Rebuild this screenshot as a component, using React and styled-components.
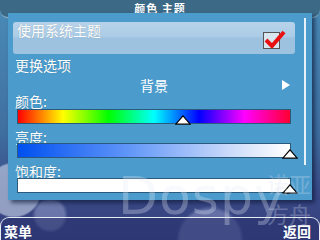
import styled, { createGlobalStyle } from "styled-components";

const GlobalStyle = createGlobalStyle`
  html, body { margin: 0; padding: 0; }
  body { font-family: "Noto Sans CJK SC", "DejaVu Sans", sans-serif; }
`;

const Screen = styled.div`
  position: relative;
  width: 320px;
  height: 240px;
  overflow: hidden;
  display: flex;
  flex-direction: column;
  background:
    radial-gradient(circle at 14px 190px, rgba(220, 230, 245, 0.55) 0 26px, transparent 28px),
    radial-gradient(circle at 50px 215px, rgba(200, 210, 240, 0.35) 0 14px, transparent 18px),
    radial-gradient(circle at 210px 240px, rgba(180, 190, 230, 0.35) 0 30px, transparent 34px),
    linear-gradient(180deg, #4a8cb8 0%, #3f6fa0 55%, #3a4a88 80%, #343f7c 100%);
  color: #fff;
`;

const TitleBar = styled.div`
  height: 18px;
  background: #3b6986;
  border-radius: 0 0 8px 8px;
  border-bottom: 1px solid #9bb8cc;
  box-sizing: border-box;
  text-align: center;
  font-size: 11px;
  line-height: 12px;
  font-weight: bold;
  letter-spacing: 1px;
  padding-top: 2px;
`;

const Panel = styled.div`
  position: relative;
  margin: -5px 8px 0;
  height: 187px;
  background: #4b9bcc;
  box-shadow: 3px 3px 4px rgba(10, 20, 50, 0.6);
  padding: 9px 17px 0 5px;
  box-sizing: border-box;
  display: flex;
  flex-direction: column;
`;

const Scrollbar = styled.div`
  position: absolute;
  right: 6px;
  top: 5px;
  width: 2px;
  height: 147px;
  background: #e6f2fa;
`;

const Highlight = styled.div`
  height: 32px;
  border-radius: 3px;
  background: linear-gradient(180deg, #b6d3ea 0%, #acccE6 45%, #9cc2e0 50%, #9ec3e0 100%);
  display: flex;
  justify-content: space-between;
  padding: 0 15px 0 2px;
  box-sizing: border-box;
`;

const Label = styled.div`
  font-size: 14px;
  line-height: 16px;
  height: ${(p) => p.$h || 16}px;
  padding-left: 2px;
  text-shadow: 0 0 1px rgba(0, 0, 0, 0.25);
`;

const CheckBox = styled.div`
  align-self: flex-end;
  margin-bottom: 5px;
  width: 17px;
  height: 17px;
  border: 1px solid #555;
  background: #d8e6f0;
  position: relative;
  box-sizing: border-box;
  svg { position: absolute; left: 0; top: -4px; }
`;

const ValueRow = styled.div`
  height: 16px;
  margin-top: 4px;
  display: flex;
  align-items: center;
  justify-content: center;
  position: relative;
  font-size: 14px;
`;

const Arrow = styled.span`
  position: absolute;
  right: 5px;
  top: 3px;
  width: 0;
  height: 0;
  border-left: 8px solid #fff;
  border-top: 5px solid transparent;
  border-bottom: 5px solid transparent;
`;

const Bar = styled.div`
  position: relative;
  margin: 0 4px 0 4px;
  height: 15px;
  border: 1px solid #2c5a7c;
  box-sizing: border-box;
  background: ${(p) => p.$bg};
`;

const Marker = styled.svg`
  position: absolute;
  bottom: -2px;
  transform: translateX(-50%);
`;

const Gap = styled.div`
  height: ${(p) => p.$h}px;
  flex: none;
`;

const SoftKeys = styled.div`
  margin-top: auto;
  height: 22px;
  border: 1px solid #e8ecf4;
  border-bottom: none;
  border-radius: 9px 9px 0 0;
  background: rgba(40, 50, 110, 0.55);
  display: flex;
  justify-content: space-between;
  align-items: flex-end;
  padding: 0 8px 0 3px;
  font-size: 14px;
  line-height: 17px;
  font-weight: bold;
`;

const Watermark = styled.div`
  position: absolute;
  left: 118px;
  top: 170px;
  font-family: "DejaVu Sans", sans-serif;
  font-size: 52px;
  line-height: 52px;
  color: rgba(230, 235, 245, 0.3);
  letter-spacing: 1px;
  pointer-events: none;
`;

const WatermarkCn = styled.div`
  position: absolute;
  left: 267px;
  top: 168px;
  font-size: 22px;
  line-height: 30px;
  color: rgba(220, 225, 240, 0.3);
  pointer-events: none;
`;

const hue =
  "linear-gradient(90deg, #ff0000 0%, #ffff00 16.6%, #00ff00 33.3%, #00ffff 50%, #0000ff 66.6%, #ff00ff 83.3%, #ff0033 100%)";

const Tri = ({ left }) => (
  <Marker width="16" height="10" viewBox="0 0 16 10" style={{ left }}>
    <polygon points="8,0.8 15.2,9.2 0.8,9.2" fill="#fff" stroke="#000" strokeWidth="1.2" />
  </Marker>
);

export default function App() {
  return (
    <>
      <GlobalStyle />
      <Screen>
        <TitleBar>颜色 主题</TitleBar>
        <Panel>
          <Scrollbar />
          <Highlight>
            <Label>使用系统主题</Label>
            <CheckBox>
              <svg width="22" height="20" viewBox="0 0 22 20">
                <path d="M2 11 L8 17 L20 3" fill="none" stroke="#e81010" strokeWidth="4" strokeLinejoin="round" />
              </svg>
            </CheckBox>
          </Highlight>
          <Gap $h={3} />
          <Label>更换选项</Label>
          <ValueRow>
            背景
            <Arrow />
          </ValueRow>
          <Label>颜色:</Label>
          <Bar $bg={hue}>
            <Tri left="60.5%" />
          </Bar>
          <Gap $h={5} />
          <Label $h={14}>亮度:</Label>
          <Bar $bg="linear-gradient(90deg, #0050f0 0%, #5f95f8 40%, #d0defa 80%, #ffffff 100%)">
            <Tri left="100%" />
          </Bar>
          <Gap $h={5} />
          <Label $h={15}>饱和度:</Label>
          <Bar $bg="#ffffff">
            <Tri left="100%" />
          </Bar>
        </Panel>
        <SoftKeys>
          <span>菜单</span>
          <span>返回</span>
        </SoftKeys>
        <Watermark>Dospy</Watermark>
        <WatermarkCn>
          诺亚
          <br />
          方舟
        </WatermarkCn>
      </Screen>
    </>
  );
}
